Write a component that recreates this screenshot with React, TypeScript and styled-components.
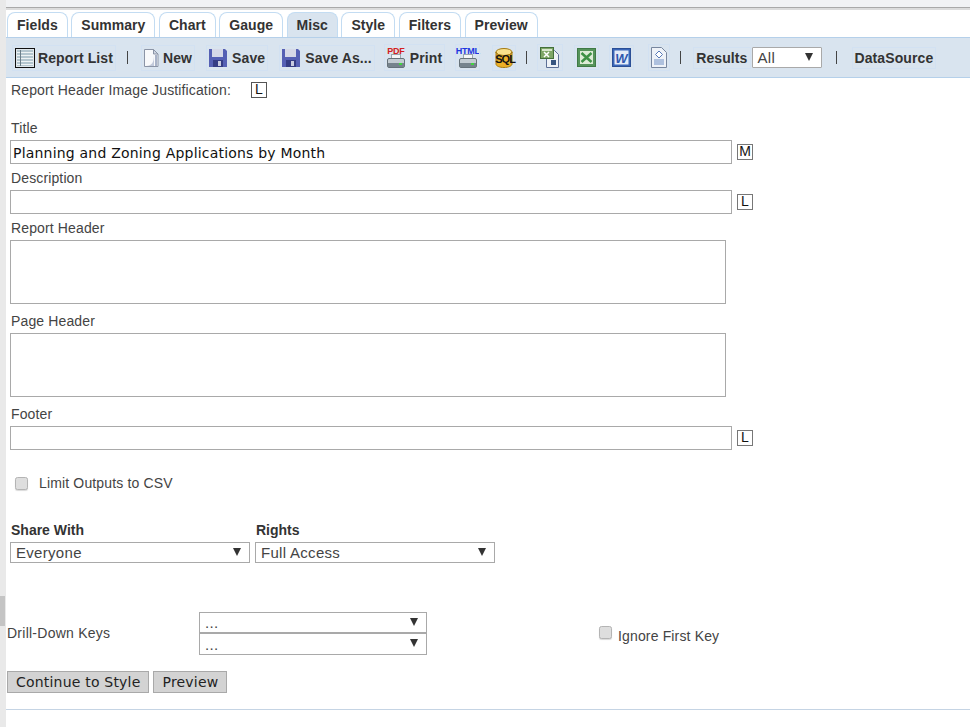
import styled, { createGlobalStyle } from 'styled-components';

const GlobalStyle = createGlobalStyle`
  html, body {
    margin: 0;
    padding: 0;
    background: #fff;
    overflow: hidden;
  }
  * {
    box-sizing: border-box;
  }
`;

const TABS = ['Fields', 'Summary', 'Chart', 'Gauge', 'Misc', 'Style', 'Filters', 'Preview'];

function ReportListIcon() {
  return (
    <svg width="20" height="20" viewBox="0 0 20 20">
      <rect x="0.5" y="0.5" width="19" height="19" fill="#dfe6ea" stroke="#111" />
      <rect x="2" y="2" width="16" height="16" fill="#b4c6cf" />
      {[4, 7, 10, 13, 16].map((y) => (
        <rect key={y} x="2" y={y} width="16" height="1" fill="#eef3f4" />
      ))}
      <rect x="5" y="2" width="1" height="16" fill="#6d7f8a" />
    </svg>
  );
}

function NewIcon() {
  return (
    <svg width="15" height="20" viewBox="0 0 15 20">
      <path d="M.5 1.500h9l4.500 4.500v12.500H.5z" fill="#f8f9fb" stroke="#8b94a6" />
      <path d="M9.500 1.500V6H14z" fill="#cfd6e2" stroke="#8b94a6" />
      <path d="M10 7v11H2c6 0 8-4 8-11z" fill="#c2cadb" />
      <rect x="11" y="7" width="2" height="11" fill="#a9b3c8" />
    </svg>
  );
}

function SaveIcon() {
  return (
    <svg width="18" height="20" viewBox="0 0 18 20">
      <path d="M0 1h16l2 2v16H0z" fill="#5560b4" />
      <rect x="3" y="1" width="11" height="8" fill="#d6d9e8" />
      <rect x="4" y="12" width="10" height="7" fill="#343c84" />
      <rect x="9" y="13" width="3" height="5" fill="#c7cbe0" />
    </svg>
  );
}

function PrinterIcon({ label, color, width }: { label: string; color: string; width: number }) {
  return (
    <PrinterBox $width={width}>
      <PrinterLabel $color={color}>{label}</PrinterLabel>
      <svg width="18" height="14" viewBox="0 0 18 14">
        <rect x="4.500" y="0.500" width="9" height="4" fill="#f4f6f7" stroke="#9aa5ad" />
        <rect x="0.500" y="4.500" width="17" height="9" rx="1.500" fill="#c3ccd2" stroke="#66727a" />
        <rect x="1" y="9" width="16" height="4" fill="#76838c" />
        <rect x="12" y="9" width="3" height="2" fill="#3fd43f" />
      </svg>
    </PrinterBox>
  );
}

function SqlIcon() {
  return (
    <SqlBox>
      <svg width="18" height="20" viewBox="0 0 18 20">
        <ellipse cx="9" cy="4" rx="8" ry="3.500" fill="#f8e08a" stroke="#a57a12" />
        <path d="M1 4v12c0 2 3.500 3.500 8 3.500s8-1.500 8-3.500V4c0 2-3.500 3.500-8 3.500S1 6 1 4z" fill="#edb026" stroke="#a57a12" />
      </svg>
      <SqlText>SQL</SqlText>
    </SqlBox>
  );
}

function ExcelDataIcon() {
  return (
    <svg width="20" height="21" viewBox="0 0 20 21">
      <path d="M6.500 3.500h8l4 4v13h-12z" fill="#eef2f7" stroke="#5c7096" />
      <rect x="0.500" y="0.500" width="13" height="11" fill="#7ea667" stroke="#43703a" />
      <rect x="2" y="2" width="10" height="2" fill="#d7e6cc" />
      <path d="M4 5l5 5M9 5l-5 5" stroke="#fff" strokeWidth="1.500" />
      <rect x="11" y="13" width="5" height="5" fill="#37557f" />
    </svg>
  );
}

function ExcelIcon() {
  return (
    <svg width="19" height="19" viewBox="0 0 19 19">
      <rect x="0.500" y="0.500" width="18" height="18" fill="#55935a" stroke="#3f7a46" />
      <rect x="3" y="3" width="13" height="13" fill="#dcebd6" />
      <path d="M4.500 5l10 9M14.500 5l-10 9" stroke="#3d9145" strokeWidth="2.500" />
    </svg>
  );
}

function WordIcon() {
  return (
    <svg width="19" height="19" viewBox="0 0 19 19">
      <rect x="0.500" y="0.500" width="18" height="18" fill="#3a66b8" stroke="#2b4f96" />
      <rect x="2.500" y="2.500" width="14" height="14" fill="#e3ebf8" />
      <WordLetter x="9.500" y="14.500" textAnchor="middle">W</WordLetter>
    </svg>
  );
}

function XmlIcon() {
  return (
    <svg width="16" height="21" viewBox="0 0 16 21">
      <path d="M.5.5h10l5 5v15H.5z" fill="#eef2f8" stroke="#77869f" />
      <path d="M8 4l3.500 3.500L8 11 4.500 7.500z" fill="#fff" stroke="#5578b8" />
      <path d="M3 13h10M3 15h10M3 17h10" stroke="#6f8fc4" />
    </svg>
  );
}

function SelectBox({ width, height, value }: { width: number; height: number; value: string }) {
  return (
    <SelectField $width={width} $height={height}>
      <SelectValue>{value}</SelectValue>
      <SelectArrow />
    </SelectField>
  );
}

export default function App() {
  return (
    <>
      <GlobalStyle />
      <Page>
        <Gutter>
          <GutterThumb />
        </Gutter>
        <Main>
          <TopStrip />
          <TabBar>
            {TABS.map((tab) => (
              <Tab key={tab} $active={tab === 'Misc'}>{tab}</Tab>
            ))}
          </TabBar>
          <Toolbar>
            <ToolItem $gap={3} $left={9}><ReportListIcon />Report List</ToolItem>
            <Divider $margin="0 16px 0 14px" />
            <ToolItem $gap={4}><NewIcon />New</ToolItem>
            <ToolItem $gap={5} $left={17}><SaveIcon />Save</ToolItem>
            <ToolItem $gap={5} $left={17}><SaveIcon />Save As...</ToolItem>
            <ToolItem $gap={5} $left={15}><PrinterIcon label="PDF" color="#d42020" width={18} />Print</ToolItem>
            <ToolItem $left={16}><PrinterIcon label="HTML" color="#2035e0" width={19} /></ToolItem>
            <ToolItem $left={18}><SqlIcon /></ToolItem>
            <Divider $margin="0 13px 0 13px" />
            <ToolItem><ExcelDataIcon /></ToolItem>
            <ToolItem $left={17}><ExcelIcon /></ToolItem>
            <ToolItem $left={16}><WordIcon /></ToolItem>
            <ToolItem $left={20}><XmlIcon /></ToolItem>
            <Divider $margin="0 15px 0 13px" />
            <ToolItem>Results</ToolItem>
            <ToolSelect>
              <SelectValue>All</SelectValue>
              <SelectArrow />
            </ToolSelect>
            <Divider $margin="0 18px 0 14px" />
            <ToolItem>DataSource</ToolItem>
          </Toolbar>
          <Form>
            <JustifyRow>
              <FieldLabel>Report Header Image Justification:</FieldLabel>
              <JustifyBox $dark>L</JustifyBox>
            </JustifyRow>

            <FieldLabel $top={18}>Title</FieldLabel>
            <InputRow>
              <TextBox>Planning and Zoning Applications by Month</TextBox>
              <JustifyBox>M</JustifyBox>
            </InputRow>

            <FieldLabel $top={6}>Description</FieldLabel>
            <InputRow>
              <TextBox />
              <JustifyBox>L</JustifyBox>
            </InputRow>

            <FieldLabel $top={6}>Report Header</FieldLabel>
            <TextArea />

            <FieldLabel $top={9}>Page Header</FieldLabel>
            <TextArea />

            <FieldLabel $top={9}>Footer</FieldLabel>
            <InputRow>
              <TextBox />
              <JustifyBox>L</JustifyBox>
            </InputRow>

            <CheckRow>
              <CheckBox />
              <CheckLabel>Limit Outputs to CSV</CheckLabel>
            </CheckRow>

            <ShareGrid>
              <ShareCol>
                <BoldLabel>Share With</BoldLabel>
                <SelectBox width={240} height={21} value="Everyone" />
              </ShareCol>
              <ShareCol>
                <BoldLabel>Rights</BoldLabel>
                <SelectBox width={240} height={21} value="Full Access" />
              </ShareCol>
            </ShareGrid>

            <DrillRow>
              <DrillLabel>Drill-Down Keys</DrillLabel>
              <DrillSelects>
                <SelectBox width={228} height={21} value="..." />
                <SelectBox width={228} height={22} value="..." />
              </DrillSelects>
              <IgnoreWrap>
                <IgnoreBox />
                <IgnoreLabel>Ignore First Key</IgnoreLabel>
              </IgnoreWrap>
            </DrillRow>

            <ButtonRow>
              <GrayButton>Continue to Style</GrayButton>
              <GrayButton>Preview</GrayButton>
            </ButtonRow>
          </Form>
          <BottomRule />
        </Main>
      </Page>
    </>
  );
}

const Page = styled.div`
  display: flex;
  width: 970px;
  height: 727px;
  font-family: 'Liberation Sans', Arial, sans-serif;
  color: #333;
  overflow: hidden;
`;

const Gutter = styled.div`
  position: relative;
  flex: 0 0 6px;
  background: #e9e9e9;
`;

const GutterThumb = styled.div`
  position: absolute;
  top: 596px;
  left: 0;
  width: 5px;
  height: 30px;
  background: #c4c4c4;
`;

const Main = styled.div`
  flex: 1;
  min-width: 0;
  display: flex;
  flex-direction: column;
  border-left: 1px solid #b5d0ea;
  margin-left: -1px;
  background: #fff;
`;

const TopStrip = styled.div`
  height: 10px;
  margin-left: -7px;
  background: #f1f2f4;
  border-bottom: 2px solid #dcdcdc;
  box-shadow: inset 0 -1px 0 #a9a9a9;
`;

const TabBar = styled.div`
  display: flex;
  gap: 3.5px;
  height: 27px;
  padding: 2px 0 0 1px;
`;

const Tab = styled.div<{ $active?: boolean }>`
  display: flex;
  align-items: center;
  justify-content: center;
  padding: 0 9px 1px;
  height: 26px;
  font-size: 14px;
  font-weight: bold;
  letter-spacing: 0.05px;
  color: #333;
  background: ${(props) => (props.$active ? '#d9e4ef' : '#fff')};
  border: 1px solid #c3dcf2;
  border-bottom: none;
  border-radius: 8px 8px 0 0;
`;

const Toolbar = styled.div`
  display: flex;
  align-items: center;
  height: 41px;
  background: #d9e4ef;
  border-top: 1px solid #b5d0ea;
  border-bottom: 1px solid #b5d0ea;
`;

const ToolItem = styled.div<{ $gap?: number; $left?: number }>`
  display: flex;
  align-items: center;
  gap: ${(props) => props.$gap ?? 0}px;
  margin-left: ${(props) => props.$left ?? 0}px;
  font-size: 14px;
  font-weight: bold;
  letter-spacing: 0.1px;
  color: #333;
  white-space: nowrap;
  outline: 1px solid #d2e1f2;
  outline-offset: 2px;
`;

const Divider = styled.span<{ $margin: string }>`
  width: 1px;
  height: 13px;
  background: #444;
  margin: ${(props) => props.$margin};
`;

const PrinterBox = styled.div<{ $width: number }>`
  display: flex;
  flex-direction: column;
  align-items: center;
  width: ${(props) => props.$width}px;
`;

const PrinterLabel = styled.span<{ $color: string }>`
  height: 7px;
  font-size: 9px;
  line-height: 8px;
  font-weight: bold;
  letter-spacing: -0.3px;
  color: ${(props) => props.$color};
`;

const SqlBox = styled.div`
  position: relative;
  display: flex;
  width: 18px;
  height: 20px;
`;

const SqlText = styled.span`
  position: absolute;
  left: 0;
  top: 6px;
  font-size: 11px;
  line-height: 11px;
  font-weight: bold;
  letter-spacing: -1px;
  color: #111;
`;

const WordLetter = styled.text`
  font-family: 'Liberation Sans', Arial, sans-serif;
  font-size: 13px;
  font-weight: bold;
  font-style: italic;
  fill: #2f57ae;
`;

const SelectField = styled.div<{ $width: number; $height: number }>`
  position: relative;
  display: flex;
  align-items: center;
  width: ${(props) => props.$width}px;
  height: ${(props) => props.$height}px;
  padding-left: 5px;
  background: #fff;
  border: 1px solid #a9a9a9;
  font-size: 15px;
  font-weight: normal;
  letter-spacing: 0.3px;
  color: #444;
`;

const ToolSelect = styled(SelectField).attrs({ $width: 70, $height: 21 })`
  margin-left: 4px;
  border-radius: 1px;
`;

const SelectValue = styled.span`
  white-space: nowrap;
`;

const SelectArrow = styled.span`
  position: absolute;
  right: 8px;
  top: 5px;
  width: 0;
  height: 0;
  border-left: 4.500px solid transparent;
  border-right: 4.500px solid transparent;
  border-top: 8px solid #333;
`;

const Form = styled.div`
  display: flex;
  flex-direction: column;
  padding: 0 0 0 4px;
`;

const JustifyRow = styled.div`
  display: flex;
  align-items: center;
  gap: 20px;
  height: 24px;
`;

const FieldLabel = styled.div<{ $top?: number }>`
  font-size: 14px;
  line-height: 16px;
  letter-spacing: 0.13px;
  color: #444;
  padding-left: 1px;
  margin-top: ${(props) => props.$top ?? 0}px;
  white-space: nowrap;
`;

const JustifyBox = styled.span<{ $dark?: boolean }>`
  display: flex;
  justify-content: center;
  width: 16px;
  height: 16px;
  font-size: 14px;
  line-height: 13px;
  color: #111;
  background: #fff;
  border: 1px solid ${(props) => (props.$dark ? '#555' : '#777')};
`;

const InputRow = styled.div`
  display: flex;
  align-items: center;
  gap: 5px;
  margin-top: 4px;
`;

const TextBox = styled.div`
  display: flex;
  align-items: center;
  width: 722px;
  height: 24px;
  padding: 1px 0 0 2px;
  background: #fff;
  border: 1px solid #a9a9a9;
  font-family: 'DejaVu Sans', Verdana, sans-serif;
  font-size: 14px;
  letter-spacing: 0.2px;
  color: #111;
  white-space: nowrap;
`;

const TextArea = styled.div`
  width: 716px;
  height: 64px;
  margin-top: 4px;
  background: #fff;
  border: 1px solid #a9a9a9;
`;

const CheckRow = styled.div`
  display: flex;
  align-items: center;
  gap: 11px;
  margin: 24px 0 0 5px;
  height: 18px;
`;

const CheckBox = styled.span`
  flex: 0 0 13px;
  height: 13px;
  background: #dedede;
  border: 1px solid #b4b4b4;
  border-radius: 2.500px;
  box-shadow: 0 1px 1px rgba(0, 0, 0, 0.15);
`;

const CheckLabel = styled.span`
  font-size: 14px;
  letter-spacing: 0.15px;
  color: #444;
  white-space: nowrap;
`;

const ShareGrid = styled.div`
  display: flex;
  gap: 5px;
  margin-top: 30px;
`;

const ShareCol = styled.div`
  display: flex;
  flex-direction: column;
  gap: 4px;
`;

const BoldLabel = styled.div`
  font-size: 14px;
  line-height: 16px;
  font-weight: bold;
  color: #333;
  padding-left: 1px;
`;

const DrillRow = styled.div`
  display: flex;
  align-items: center;
  margin: 49px 0 0 -3px;
`;

const DrillLabel = styled.div`
  width: 192px;
  padding-bottom: 2px;
  font-size: 14px;
  letter-spacing: 0.25px;
  color: #444;
  white-space: nowrap;
`;

const DrillSelects = styled.div`
  display: flex;
  flex-direction: column;
`;

const IgnoreWrap = styled.div`
  display: flex;
  align-items: flex-start;
  gap: 6px;
  height: 20px;
  margin: 0 0 0 172px;
`;

const IgnoreBox = styled(CheckBox)`
  margin-top: 2px;
  height: 13px;
`;

const IgnoreLabel = styled(CheckLabel)`
  margin-top: 4px;
`;

const ButtonRow = styled.div`
  display: flex;
  gap: 4px;
  margin: 16px 0 0 -3px;
`;

const GrayButton = styled.div`
  display: flex;
  align-items: center;
  height: 22px;
  padding: 0 8px;
  background: #d3d3d3;
  border: 1px solid #a9a9a9;
  font-family: 'DejaVu Sans', Verdana, sans-serif;
  font-size: 14px;
  letter-spacing: 0.2px;
  color: #222;
`;

const BottomRule = styled.div`
  flex: 1;
  margin: 16px 0 0 -1px;
  background: #fff;
  border-top: 1px solid #c5d4e4;
  border-left: 1px solid #6f6f6f;
`;
